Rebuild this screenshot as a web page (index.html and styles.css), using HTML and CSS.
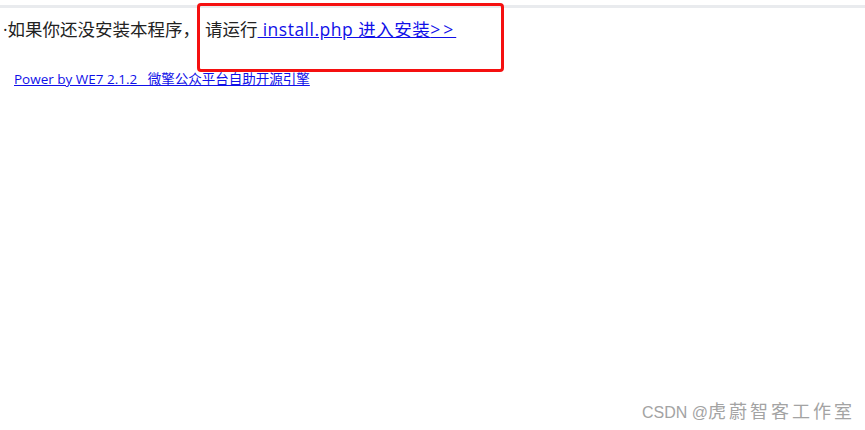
FILE: index.html
```html
<!DOCTYPE html>
<html lang="zh-CN">
<head>
    <meta charset="UTF-8">
    <meta name="viewport" content="width=device-width, initial-scale=1.0">
    <title>微擎 - 安装提示</title>
    <link rel="stylesheet" href="styles.css">
</head>
<body>
    <div class="topbar"></div>

    <div class="page">
        <p class="notice">·如果你还没安装本程序，<span class="run">请运行</span><a class="install" href="install.php"> install.php 进入安装<span class="arrows">&gt;&gt;</span></a></p>
        <p class="power"><a href="#">Power by WE7 2.1.2&nbsp;&nbsp; 微擎公众平台自助开源引擎</a></p>

        <!-- annotation box drawn over the screenshot -->
        <div class="highlight"></div>
    </div>

    <div class="watermark">CSDN @<span class="wm-cjk">虎蔚智客工作室</span></div>
</body>
</html>
```

FILE: styles.css
```css
body {
    margin: 0;
    background: #fff;
    font-family: "Open Sans", "Noto Sans CJK SC", sans-serif;
    color: #222;
    height: 430px;
    position: relative;
    overflow: hidden;
}
a {
    color: #1010e8;
}
.topbar {
    margin-top: 5px;
    height: 0;
    border-top: 3px solid #e9ebee;
}
.page {
    position: relative;
    padding-top: 8px;
}
.notice {
    margin: 0 0 0 3px;
    font-size: 17.5px;
    line-height: 26px;
}
.run {
    margin-left: 5px;
}
.install {
    letter-spacing: 0.5px;
}
.arrows {
    letter-spacing: 3px;
}
.power {
    margin: 28px 0 0 14px;
    font-size: 13.5px;
    line-height: 18px;
}
.highlight {
    position: absolute;
    left: 197px;
    top: -5px;
    width: 301px;
    height: 63px;
    border: 3px solid #f51010;
    border-radius: 4px;
}
.watermark {
    position: absolute;
    right: 10px;
    bottom: 7px;
    font-family: "Liberation Sans", "Noto Sans CJK SC", sans-serif;
    font-size: 16px;
    color: #a3a3a3;
}
.wm-cjk {
    font-size: 18px;
    letter-spacing: 3px;
}
```
